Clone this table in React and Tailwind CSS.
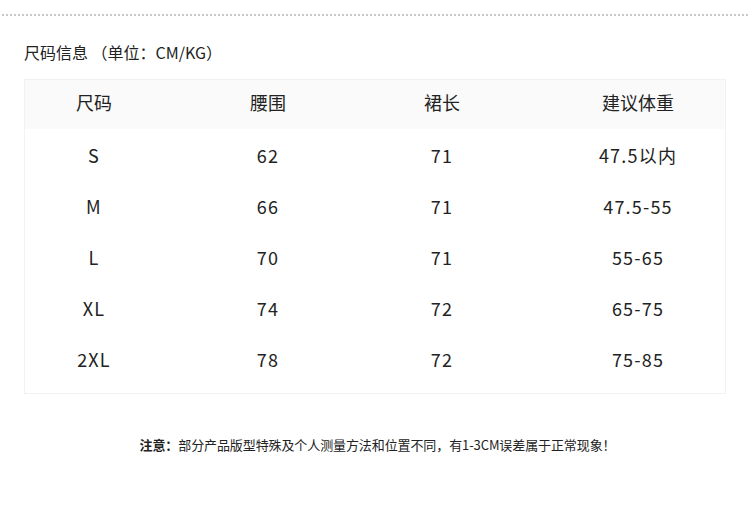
export default function App() {
  const rows = [
    ["S", "62", "71", "47.5以内"],
    ["M", "66", "71", "47.5-55"],
    ["L", "70", "71", "55-65"],
    ["XL", "74", "72", "65-75"],
    ["2XL", "78", "72", "75-85"],
  ];
  const font = { fontFamily: '"Noto Sans CJK SC", "Noto Sans", sans-serif' };
  return (
    <div className="w-[750px] h-[509px] bg-white text-[#222] overflow-hidden" style={font}>
      <div className="pt-[14px] px-[2px]">
        <div className="border-t-2 border-dotted border-[#c8c8c8]" />
      </div>
      <div className="pl-[24px] pt-[25px] text-[16px] leading-[22px] text-[#222]">
        尺码信息 （单位：CM/KG）
      </div>
      <div className="ml-[24px] mt-[16px] w-[702px] border border-[#f2f2f2]">
        <div className="grid grid-cols-[138px_210px_138px_216px] h-[49px] pb-[4px] bg-[#fafafa] items-center text-[18px]">
          <div className="text-center">尺码</div>
          <div className="text-center">腰围</div>
          <div className="text-center">裙长</div>
          <div className="text-center pl-[38px]">建议体重</div>
        </div>
        <div className="pt-[1px] pb-[8px]">
          {rows.map((r, i) => (
            <div key={i} className="grid grid-cols-[138px_210px_138px_216px] h-[51px] items-center text-[18px] tracking-[1.2px]">
              <div className="text-center">{r[0]}</div>
              <div className="text-center">{r[1]}</div>
              <div className="text-center">{r[2]}</div>
              <div className="text-center pl-[38px]">{r[3]}</div>
            </div>
          ))}
        </div>
      </div>
      <div className="mt-[42px] pl-[5px] text-center text-[13px] leading-[18px] tracking-[-0.1px] text-[#222]">
        <span className="font-bold">注意：</span>部分产品版型特殊及个人测量方法和位置不同，有1-3CM误差属于正常现象！
      </div>
    </div>
  );
}
